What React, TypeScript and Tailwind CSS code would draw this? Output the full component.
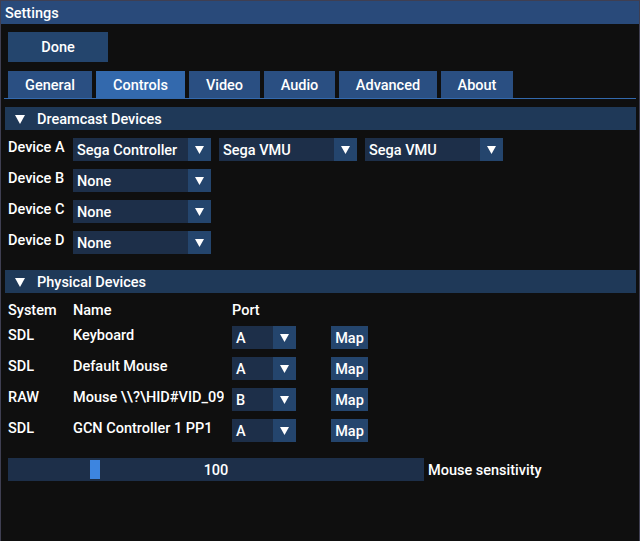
import React from 'react';

const font = { fontFamily: 'Roboto, "Noto Sans", sans-serif' };

function DownTriangle({ w = 9, h = 8 }: { w?: number; h?: number }) {
  return (
    <svg width={w} height={h} viewBox={`0 0 ${w} ${h}`}>
      <polygon points={`0,0 ${w},0 ${w / 2},${h}`} fill="#ffffff" />
    </svg>
  );
}

function Combo({ value, width }: { value: string; width: string }) {
  return (
    <div className={`flex h-[23px] ${width} shrink-0`}>
      <div className="flex-1 bg-[#1d2f49] pl-[4px] pt-[4px] overflow-hidden whitespace-nowrap">{value}</div>
      <div className="w-[23px] bg-[#24456d] flex items-center justify-center">
        <DownTriangle />
      </div>
    </div>
  );
}

function Header({ title }: { title: string }) {
  return (
    <div className="ml-[4px] w-[631px] h-[23px] bg-[#1f3958] flex items-center">
      <div className="ml-[10px] w-[22px] translate-y-[1px]">
        <DownTriangle w={10} h={9} />
      </div>
      <span className="translate-y-[1px]">{title}</span>
    </div>
  );
}

const tabs = [
  { name: 'General', w: 'w-[84px]' },
  { name: 'Controls', w: 'w-[89px]', active: true },
  { name: 'Video', w: 'w-[71px]' },
  { name: 'Audio', w: 'w-[71px]' },
  { name: 'Advanced', w: 'w-[98px]' },
  { name: 'About', w: 'w-[72px]' },
];

const devices = [
  { label: 'Device A', combos: ['Sega Controller', 'Sega VMU', 'Sega VMU'] },
  { label: 'Device B', combos: ['None'] },
  { label: 'Device C', combos: ['None'] },
  { label: 'Device D', combos: ['None'] },
];

// the name column clips long device names
const physical = [
  { sys: 'SDL', name: 'Keyboard', port: 'A' },
  { sys: 'SDL', name: 'Default Mouse', port: 'A' },
  { sys: 'RAW', name: 'Mouse \\\\?\\HID#VID_09', port: 'B' },
  { sys: 'SDL', name: 'GCN Controller 1 PP1', port: 'A' },
];

export default function App() {
  return (
    <div
      className="w-[640px] h-[541px] bg-[#0f0f0f] border-t border-x border-[#3f3f52] text-white text-[14.5px] leading-[17px] font-medium overflow-hidden"
      style={font}
    >
      <div className="h-[23px] bg-[#294a7a] pl-[4px] flex items-center">
        <span className="translate-y-[1px]">Settings</span>
      </div>

      <div className="pl-[7px]">
        <div className="mt-[8px] w-[100px] h-[30px] bg-[#24456d] flex items-center justify-center">Done</div>
      </div>

      <div className="mt-[9px] pl-[7px] flex gap-[4px]">
        {tabs.map((t) => (
          <div
            key={t.name}
            className={`${t.w} h-[27px] flex items-center justify-center ${t.active ? 'bg-[#3369ad]' : 'bg-[#2a4f82]'}`}
          >
            <span className="translate-y-[1px]">{t.name}</span>
          </div>
        ))}
      </div>
      <div className="ml-[3px] w-[632px] h-[1px] bg-[#3369ad]" />

      <div className="mt-[8px]">
        <Header title="Dreamcast Devices" />
      </div>

      <div className="mt-[8px] pl-[7px] flex flex-col gap-[8px]">
        {devices.map((d) => (
          <div key={d.label} className="flex h-[23px]">
            <div className="w-[65px] pt-[1px]">{d.label}</div>
            <div className="flex gap-[8px]">
              {d.combos.map((c, i) => (
                <Combo key={i} value={c} width="w-[138px]" />
              ))}
            </div>
          </div>
        ))}
      </div>

      <div className="mt-[16px]">
        <Header title="Physical Devices" />
      </div>

      <div className="mt-[8px] pl-[7px] flex h-[17px] pt-[1px]">
        <div className="w-[65px]">System</div>
        <div className="w-[159px]">Name</div>
        <div>Port</div>
      </div>

      <div className="mt-[8px] pl-[7px] flex flex-col gap-[8px]">
        {physical.map((p, i) => (
          <div key={i} className="flex h-[23px]">
            <div className="w-[65px] pt-[1px]">{p.sys}</div>
            <div className="w-[151px] pt-[1px] overflow-hidden whitespace-nowrap">{p.name}</div>
            <div className="w-[8px]" />
            <div className="w-[99px]">
              <Combo value={p.port} width="w-[64px]" />
            </div>
            <div className="w-[37px] h-[23px] bg-[#24456d] flex items-center justify-center">
              <span className="translate-y-[1px]">Map</span>
            </div>
          </div>
        ))}
      </div>

      <div className="mt-[16px] pl-[7px] flex items-center">
        <div className="relative w-[416px] h-[23px] bg-[#1d2f49] flex items-center justify-center">
          <div className="absolute left-[82px] top-[2px] w-[10px] h-[19px] bg-[#3d85e0]" />
          <span className="relative translate-y-[1px]">100</span>
        </div>
        <span className="ml-[4px] translate-y-[1px]">Mouse sensitivity</span>
      </div>
    </div>
  );
}
